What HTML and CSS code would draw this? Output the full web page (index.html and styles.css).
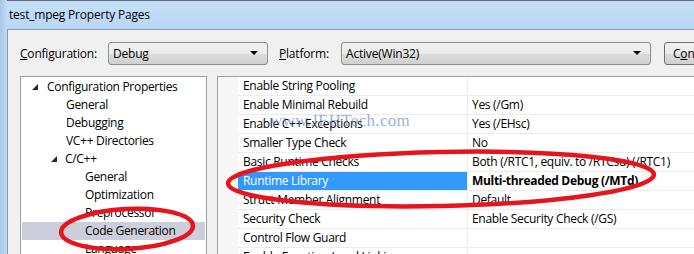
FILE: index.html
```html
<!DOCTYPE html>
<html lang="en">
<head>
    <meta charset="UTF-8">
    <title>test_mpeg Property Pages</title>
    <link rel="stylesheet" href="styles.css">
</head>
<body>
    <div class="window">
        <div class="titlebar">test_mpeg Property Pages</div>

        <div class="client">
            <!-- Configuration / platform selectors -->
            <div class="toolbar">
                <label class="label-config"><u>C</u>onfiguration:</label>
                <div class="combo combo-config">Debug<span class="arrow"></span></div>
                <label class="label-platform"><u>P</u>latform:</label>
                <div class="combo combo-platform">Active(Win32)<span class="arrow"></span></div>
                <button class="btn">C<u>o</u>nfiguration Manager...</button>
            </div>

            <div class="panes">
                <!-- Tree -->
                <ul class="tree">
                    <li class="lvl0"><span class="tri"></span>Configuration Properties</li>
                    <li class="lvl1">General</li>
                    <li class="lvl1">Debugging</li>
                    <li class="lvl1">VC++ Directories</li>
                    <li class="lvl1b"><span class="tri"></span>C/C++</li>
                    <li class="lvl2">General</li>
                    <li class="lvl2">Optimization</li>
                    <li class="lvl2">Preprocessor</li>
                    <li class="lvl2 selected">Code Generation</li>
                    <li class="lvl2">Language</li>
                </ul>

                <!-- Property grid -->
                <div class="grid">
                    <div class="row"><span class="name">Enable String Pooling</span><span class="value"></span></div>
                    <div class="row"><span class="name">Enable Minimal Rebuild</span><span class="value">Yes (/Gm)</span></div>
                    <div class="row"><span class="name">Enable C++ Exceptions</span><span class="value">Yes (/EHsc)</span></div>
                    <div class="row"><span class="name">Smaller Type Check</span><span class="value">No</span></div>
                    <div class="row"><span class="name">Basic Runtime Checks</span><span class="value">Both (/RTC1, equiv. to /RTCsu) (/RTC1)</span></div>
                    <div class="row active"><span class="name">Runtime Library</span><span class="value">Multi-threaded Debug (/MTd)</span></div>
                    <div class="row"><span class="name">Struct Member Alignment</span><span class="value">Default</span></div>
                    <div class="row"><span class="name">Security Check</span><span class="value">Enable Security Check (/GS)</span></div>
                    <div class="row"><span class="name">Control Flow Guard</span><span class="value"></span></div>
                    <div class="row"><span class="name">Enable Function-Level Linking</span><span class="value"></span></div>
                </div>
            </div>
        </div>

        <!-- Watermark and red annotation marks -->
        <div class="watermark">www.JEHTech.com</div>
        <svg class="marks" width="694" height="254" viewBox="0 0 694 254">
            <ellipse cx="441" cy="179" rx="213" ry="27" transform="rotate(-1.2 441 179)" />
            <ellipse cx="127" cy="229" rx="66" ry="20" transform="rotate(-3 127 229)" />
        </svg>
    </div>
</body>
</html>
```

FILE: styles.css
```css
/* Basic Reset */
* {
    margin: 0;
    padding: 0;
    box-sizing: border-box;
}

body {
    font-family: 'Open Sans', 'Noto Sans', sans-serif;
    font-size: 12px;
    color: #000;
    background: #c4dcf4;
    width: 694px;
    height: 254px;
    overflow: hidden;
}

.window {
    position: relative;
    width: 694px;
    height: 254px;
    background: linear-gradient(90deg, #a9c6e4, #bcd8f5 6px);
    padding-left: 7px;
    overflow: hidden;
}

/* Title bar */
.titlebar {
    height: 29px;
    padding: 5px 0 0 2px;
    font-size: 12px;
    letter-spacing: -0.2px;
    border-top: 1px solid #5c6f85;
    background: linear-gradient(#c7e0f8, #b8d6f5);
}

/* Dialog client area */
.client {
    height: 225px;
    background: #f0f0f0;
    border-top: 1px solid #8a9bb0;
    border-left: 1px solid #8a9bb0;
    padding: 12px 0 0 12px;
}

.toolbar {
    display: flex;
    align-items: center;
    height: 23px;
    white-space: nowrap;
}

.toolbar > * {
    flex-shrink: 0;
}

.label-config {
    width: 88px;
    letter-spacing: -0.2px;
}

.label-platform {
    width: 62px;
    margin-left: 11px;
    letter-spacing: -0.2px;
}

.combo {
    position: relative;
    height: 23px;
    line-height: 21px;
    padding-left: 4px;
    border: 1px solid #8e8f8f;
    border-radius: 3px;
    background: linear-gradient(#f2f2f2, #ebebeb 50%, #dddddd 51%, #cfcfcf);
    letter-spacing: -0.2px;
}

.combo-config {
    width: 160px;
}

.combo-platform {
    width: 310px;
}

.arrow {
    position: absolute;
    right: 9px;
    top: 8px;
    border-left: 4px solid transparent;
    border-right: 4px solid transparent;
    border-top: 4px solid #000;
}

.btn {
    height: 23px;
    margin-left: 13px;
    padding: 0 8px;
    font: inherit;
    letter-spacing: -0.2px;
    border: 1px solid #707070;
    border-radius: 3px;
    background: linear-gradient(#f2f2f2, #ebebeb 50%, #dddddd 51%, #cfcfcf);
    text-align: left;
}

/* Panes */
.panes {
    display: flex;
    gap: 10px;
    margin-top: 11px;
    height: 200px;
}

.tree {
    list-style: none;
    width: 187px;
    flex-shrink: 0;
    background: #fff;
    border: 1px solid #a0a0a0;
    border-bottom: none;
    padding: 1px 1px 0 1px;
}

.tree li {
    height: 18px;
    line-height: 18px;
    white-space: nowrap;
    letter-spacing: -0.3px;
}

.tree .lvl0 { padding-left: 10px; }
.tree .lvl1 { padding-left: 44px; }
.tree .lvl1b { padding-left: 29px; }
.tree .lvl2 { padding-left: 63px; }

.tree .selected {
    background: #cccedb;
}

.tri {
    display: inline-block;
    width: 0;
    height: 0;
    border-left: 6px solid transparent;
    border-bottom: 6px solid #262626;
    margin-right: 9px;
    vertical-align: 1px;
}

.tree .lvl1b .tri {
    margin-right: 8px;
}

.grid {
    flex: 1;
    background: #f7f7f7;
    border-top: 1px solid #a0a0a0;
    border-left: 1px solid #a0a0a0;
    padding-left: 20px;
}

.row {
    display: flex;
    height: 19px;
    line-height: 18px;
    background: #fff;
    border-bottom: 1px solid #ececec;
    white-space: nowrap;
    letter-spacing: -0.3px;
}

.row .name {
    width: 230px;
    flex-shrink: 0;
    padding-left: 5px;
    border-right: 1px solid #ececec;
}

.row .value {
    padding-left: 4px;
}

.row.active .name {
    background: #3399ff;
    color: #fff;
}

.row.active .value {
    font-weight: bold;
}

/* Overlays */
.watermark {
    position: absolute;
    left: 270px;
    top: 111px;
    font-family: 'Liberation Serif', serif;
    font-size: 17px;
    letter-spacing: 0.3px;
    color: rgba(100, 130, 195, 0.65);
    pointer-events: none;
}

.marks {
    position: absolute;
    left: 0;
    top: 0;
    pointer-events: none;
}

.marks ellipse {
    fill: none;
    stroke: #e8141c;
    stroke-width: 4.5;
}
```
